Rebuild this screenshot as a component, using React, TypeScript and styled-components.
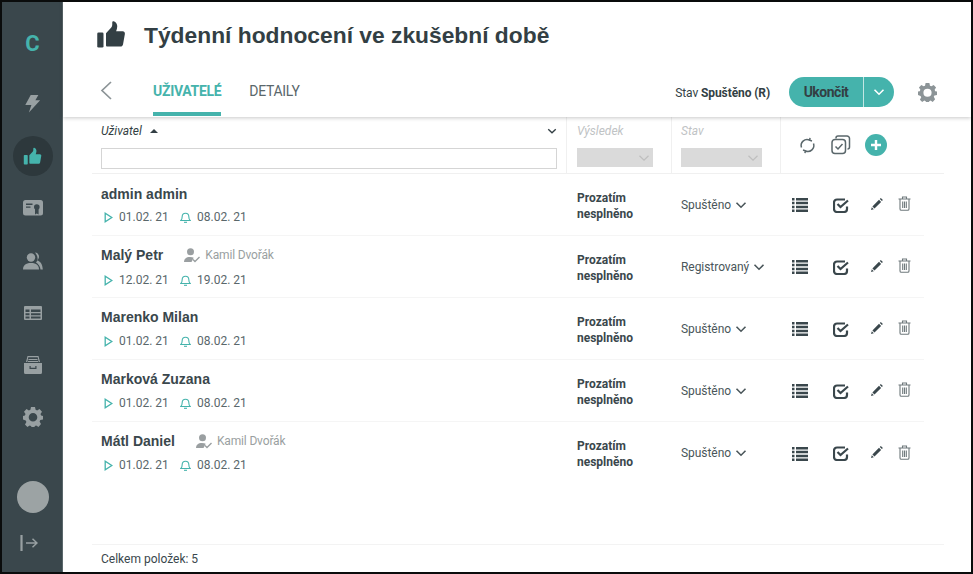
import React from "react";
import styled, { createGlobalStyle } from "styled-components";

const GlobalStyle = createGlobalStyle`
  html, body { margin: 0; padding: 0; background: #0c0f10; }
  body { font-family: Roboto, "Liberation Sans", sans-serif; }
  * { box-sizing: border-box; }
`;

const Frame = styled.div`
  width: 973px;
  height: 574px;
  padding: 2px;
  background: #0a0c0c;
`;
const Layout = styled.div`
  display: flex;
  height: 100%;
  background: #fff;
`;
const Sidebar = styled.nav`
  width: 61px;
  flex: none;
  background: #3a474c;
  border-right: 1px solid #5a676b;
  display: flex;
  flex-direction: column;
  align-items: center;
  padding: 31px 0 0 1px;
`;
const Logo = styled.div`
  height: 22px;
  font: 700 22px Roboto, sans-serif;
  line-height: 22px;
  color: #45b3ac;
  margin-bottom: 29px;
`;
const NavItem = styled.div<{ $active?: boolean }>`
  width: 40px;
  height: 40px;
  border-radius: 50%;
  margin-bottom: 12.2px;
  flex: none;
  display: flex;
  align-items: center;
  justify-content: center;
  background: ${(p) => (p.$active ? "#2d383c" : "transparent")};
  color: ${(p) => (p.$active ? "#45b3ac" : "#98a0a2")};
`;
const Avatar = styled.div`
  width: 32px;
  height: 32px;
  border-radius: 50%;
  background: #9ca3a4;
  margin-top: auto;
`;
const Logout = styled.div`
  height: 18px;
  margin: 21px 8px 20px 0;
  color: #98a0a2;
`;
const Main = styled.main`
  flex: 1;
  min-width: 0;
  display: flex;
  flex-direction: column;
`;
const Head = styled.header`
  flex: none;
  height: 115px;
  box-shadow: 0 1px 4px rgba(0, 0, 0, 0.22);
  z-index: 1;
  display: flex;
  flex-direction: column;
`;
const TitleRow = styled.div`
  display: flex;
  align-items: center;
  height: 66px;
  padding: 0 0 0 33px;
  color: #333f44;
`;
const Title = styled.h1`
  margin: 0 0 0 18px;
  font: 700 22.8px "Liberation Sans", sans-serif;
  color: #333f44;
`;
const TabRow = styled.div`
  flex: 1;
  display: flex;
  align-items: stretch;
  padding: 0 34px 0 36px;
`;
const Back = styled.div`
  width: 54px;
  color: #8c9497;
  padding: 12px 0 0 1px;
`;
const Tab = styled.div<{ $active?: boolean }>`
  height: 48px;
  padding-top: 14px;
  margin-right: 28px;
  font-size: 14px;
  letter-spacing: -0.3px;
  line-height: 18px;
  font-weight: ${(p) => (p.$active ? 700 : 400)};
  color: ${(p) => (p.$active ? "#45b3ac" : "#5a676b")};
  border-bottom: ${(p) => (p.$active ? "4px solid #45b3ac" : "0")};
`;
const StateText = styled.div`
  margin-left: auto;
  align-self: flex-start;
  padding-top: 17px;
  font-size: 12px;
  line-height: 16px;
  letter-spacing: -0.1px;
  color: #333f44;
  b { font-weight: 700; }
`;
const SplitButton = styled.div`
  align-self: flex-start;
  margin: 9px 0 0 19px;
  height: 30px;
  width: 105px;
  display: flex;
  border-radius: 15px;
  background: #45b3ac;
  overflow: hidden;
`;
const ButtonLabel = styled.div`
  width: 75px;
  border-right: 1px solid #c3e6e3;
  text-align: center;
  font-size: 14px;
  letter-spacing: -0.5px;
  line-height: 30px;
  font-weight: 700;
  color: #333f44;
`;
const ButtonCaret = styled.div`
  flex: 1;
  display: flex;
  align-items: center;
  justify-content: center;
  color: #fff;
`;
const HeadGear = styled.div`
  align-self: flex-start;
  margin: 15px 0 0 24px;
  color: #8c9497;
`;
const TableWrap = styled.div`
  flex: 1;
  min-height: 0;
  padding-left: 29px;
  display: flex;
  flex-direction: column;
`;
const Rows = styled.div`
  flex: 1;
`;
const gridCols = "475px 105px 109px 143px";
const HeaderRow = styled.div`
  display: grid;
  grid-template-columns: ${gridCols};
  height: 57px;
  width: 852px;
  border-bottom: 1px solid #f0f0f0;
`;
const HeaderCell = styled.div<{ $left: number }>`
  padding: 6px 9px 0 ${(p) => p.$left}px;
  border-right: 1px solid #f0f0f0;
`;
const HeaderLabel = styled.div<{ $muted?: boolean }>`
  display: flex;
  align-items: center;
  height: 16px;
  font-size: 12px;
  font-style: italic;
  color: ${(p) => (p.$muted ? "#bfc3c5" : "#333f44")};
`;
const SortCaret = styled.span`
  width: 0;
  height: 0;
  margin-left: 8px;
  border: 4px solid transparent;
  border-top: 0;
  border-bottom: 4px solid #333f44;
`;
const HeaderChevron = styled.span`
  margin-left: auto;
  display: flex;
`;
const SearchBox = styled.input`
  display: block;
  width: 456px;
  height: 21px;
  margin-top: 9px;
  border: 1px solid #d5d5d5;
  background: #fff;
  padding: 0;
`;
const FilterSelect = styled.div<{ $width: number }>`
  width: ${(p) => p.$width}px;
  height: 19px;
  margin-top: 9px;
  background: #dadada;
  display: flex;
  align-items: center;
  justify-content: flex-end;
  padding-right: 3px;
  color: #bfbfbf;
`;
const ToolCell = styled.div`
  display: flex;
  align-items: center;
  padding: 0 0 0 18px;
  color: #5a676b;
  svg { flex: none; }
`;
const ToolSlot = styled.div<{ $width: number }>`
  display: flex;
  width: ${(p) => p.$width}px;
`;
const AddButton = styled.div`
  width: 22px;
  height: 22px;
  margin-left: 3px;
  border-radius: 50%;
  background: #45b3ac;
  color: #fff;
  display: flex;
  align-items: center;
  justify-content: center;
`;
const Row = styled.div`
  display: grid;
  grid-template-columns: ${gridCols};
  height: 62px;
  width: 832px;
  border-bottom: 1px solid #f5f5f5;
  color: #333f44;
  &:last-child { border-bottom: 0; }
`;
const UserCell = styled.div<{ $first?: boolean }>`
  padding: ${(p) => (p.$first ? "11px" : "10px")} 0 0 9px;
`;
const NameLine = styled.div`
  display: flex;
  align-items: center;
  height: 18px;
`;
const Name = styled.div`
  font: 700 14px "Liberation Sans", sans-serif;
  color: #3a474c;
`;
const Supervisor = styled.div`
  display: flex;
  align-items: center;
  margin-left: 21px;
  font-size: 12px;
  letter-spacing: -0.15px;
  color: #9a9fa1;
  svg { margin-right: 4px; }
`;
const Dates = styled.div<{ $gap: number }>`
  display: flex;
  align-items: center;
  margin-top: ${(p) => p.$gap}px;
  font-size: 12px;
  line-height: 16px;
  white-space: nowrap;
  color: #5a676b;
`;
const DateIcon = styled.span<{ $width: number; $inset: number }>`
  display: flex;
  flex: none;
  width: ${(p) => p.$width}px;
  padding-left: ${(p) => p.$inset}px;
  color: #45b3ac;
`;
const DateText = styled.span`
  width: 49px;
  margin-right: 12px;
`;
const ResultCell = styled.div`
  padding: 17px 0 0 10px;
  font-size: 12px;
  line-height: 15.5px;
  font-weight: 700;
  color: #3a474c;
`;
const StateCell = styled.div`
  padding-left: 9px;
  display: flex;
  align-items: center;
  font-size: 12px;
  letter-spacing: -0.05px;
  color: #4a565a;
  svg { margin-left: 4px; }
`;
const ActionCell = styled.div`
  display: grid;
  grid-template-columns: 41px 37px 28px 24px;
  align-items: center;
  padding: 1px 0 0 11px;
  color: #3a474c;
`;
const ActionIcon = styled.span<{ $muted?: boolean; $up?: boolean }>`
  display: flex;
  color: ${(p) => (p.$muted ? "#6f797c" : "#3a474c")};
  margin-top: ${(p) => (p.$up ? "-3px" : "0")};
`;
const Footer = styled.div`
  flex: none;
  height: 28px;
  width: 852px;
  border-top: 1px solid #f3f3f3;
  padding: 6px 0 0 9px;
  font-size: 12px;
  line-height: 16px;
  color: #3a474c;
`;

const Thumb = ({ size }: { size: number }) => (
  <svg width={size} height={size} viewBox="0 0 24 24" fill="currentColor">
    <rect x="1" y="10" width="5" height="12" rx="1" />
    <path d="M8 21V10.500l4.200-4.600c.5-.6.8-1.300.8-2.100V1.900c0-.7.6-1.100 1.200-.9 1.800.6 2.800 2.200 2.800 4 0 1.300-.4 2.700-.9 4h5.200c1.200 0 2 1 1.800 2.200l-1.500 8.300c-.2 1-1 1.700-2 1.700H9c-.6 0-1-.4-1-1z" />
  </svg>
);
const Bolt = () => (
  <svg width="17" height="18" viewBox="0 0 18 20" fill="currentColor">
    <path d="M7 0h8.500l-3.300 5.800H17.500L5 19.500l2.800-8.300H1z" />
  </svg>
);
const Cert = () => (
  <svg width="20" height="16" viewBox="0 0 20 16" fill="currentColor">
    <rect width="20" height="15.500" rx="2.500" />
    <path d="M3 3.500h6.500v1.500H3zM3 6.500h4.500v1.200H3z" fill="#3a474c" />
    <circle cx="13.800" cy="7" r="2.800" fill="#3a474c" />
    <path d="M12 9h3.600v5.500l-1.800-1-1.800 1z" fill="#3a474c" />
  </svg>
);
const People = () => (
  <svg width="20" height="18" viewBox="0 0 20 18" fill="currentColor">
    <circle cx="8" cy="5.500" r="4.200" />
    <path d="M0 17.500c0-4 2.500-6.500 8-6.500s8 2.500 8 6.500z" />
    <path d="M12 .5c2.500 0 4 2 4 4.300 0 1.600-.8 2.800-2 3.500 3.500 1 5.500 4.200 5.800 9.200h-2.300c-.3-3-2-5.500-4.500-7 1.200-1.300 1.600-2.700 1.600-4 0-2-1-4-2.600-6z" />
  </svg>
);
const TableIcon = () => (
  <svg width="18" height="14" viewBox="0 0 18 14" fill="currentColor">
    <path fillRule="evenodd" d="M1 0h16a1 1 0 0 1 1 1v12a1 1 0 0 1-1 1H1a1 1 0 0 1-1-1V1a1 1 0 0 1 1-1zM1.500 3.500V6h4V3.500zM7 3.500V6h9.500V3.500zM1.500 7.300v2h4v-2zM7 7.300v2h9.500v-2zM1.500 10.500v2h4v-2zM7 10.500v2h9.500v-2z" />
  </svg>
);
const Archive = () => (
  <svg width="18" height="18" viewBox="0 0 18 18" fill="currentColor">
    <path fillRule="evenodd" d="M3.500 0h11L16 6h-1.300l-1-4.700H4.300l-1 4.700H2z" />
    <rect x="4.500" y="3" width="9" height="1" />
    <rect x="4" y="5" width="10" height="1" />
    <path fillRule="evenodd" d="M0 7h18v9.500a1.500 1.500 0 0 1-1.500 1.500h-15A1.500 1.500 0 0 1 0 16.500zM5.500 10v3h7v-3h-1.200v1.800H6.700V10z" />
  </svg>
);
const Gear = ({ size }: { size: number }) => (
  <svg width={size} height={size} viewBox="0 0 20 20" fill="currentColor">
    <path fillRule="evenodd" d="M8 0h4l.6 2.800 1.500.6L16.500 2 19 4.700l-1.500 2.400.6 1.500L20 9v3.500l-2.700.6-.7 1.500 1.400 2.400L15.500 20l-2.300-1.500-1.300.6L11.500 20h-3l-.5-.9-1.300-.6L4.400 20 2 17.500l1.400-2.400-.7-1.500L0 12.500V9l1.900-.4.600-1.500L1 4.700 3.500 2l2.400 1.400 1.500-.6zM10 6a4.300 4.300 0 1 0 0 8.600A4.300 4.300 0 0 0 10 6z" />
  </svg>
);
const LogoutIcon = () => (
  <svg width="18" height="18" viewBox="0 0 18 18" fill="none" stroke="currentColor" strokeWidth="1.500">
    <path d="M1.500 1v16" strokeWidth="2.200" />
    <path d="M6 9h11M12.500 4.800 17 9l-4.500 4.200" />
  </svg>
);
const Chevron = ({ size = 12, width = 1.6 }: { size?: number; width?: number }) => (
  <svg width={size} height={size} viewBox="0 0 12 12" fill="none" stroke="currentColor" strokeWidth={width}>
    <path d="M1.500 3.800 6 8.200l4.500-4.400" />
  </svg>
);
const BackArrow = () => (
  <svg width="12" height="22" viewBox="0 0 12 22" fill="none" stroke="currentColor" strokeWidth="1.700">
    <path d="M11 2 2 10.500l9 8.500" />
  </svg>
);
const Sync = () => (
  <svg width="17" height="17" viewBox="0 0 17 17" fill="none" stroke="currentColor" strokeWidth="1.500">
    <path d="M2.500 10.500a6 6 0 0 1 8-7.500" />
    <path d="M14.500 6.500a6 6 0 0 1-8 7.500" />
    <path d="M11 .8 10.700 3.200 13 4M6 16.200l.3-2.400L4 13" />
  </svg>
);
const CopyCheck = () => (
  <svg width="20" height="20" viewBox="0 0 20 20" fill="none" stroke="currentColor" strokeWidth="1.500">
    <rect x="1" y="4.500" width="13.500" height="14" rx="3" />
    <path d="M5 3.500V3a2 2 0 0 1 2-2h9a2.500 2.500 0 0 1 2.500 2.500V12a2 2 0 0 1-2 2" />
    <path d="M4.500 11.500l2.500 2.500 4.500-5" />
  </svg>
);
const Plus = () => (
  <svg width="12" height="12" viewBox="0 0 12 12" stroke="currentColor" strokeWidth="2.400">
    <path d="M6 1v10M1 6h10" />
  </svg>
);
const Play = () => (
  <svg width="9" height="11" viewBox="0 0 9 11" fill="none" stroke="currentColor" strokeWidth="1.300">
    <path d="M1.200 1.200v8.600L7.800 5.500z" />
  </svg>
);
const Bell = () => (
  <svg width="11" height="11" viewBox="0 0 11 11" fill="none" stroke="currentColor" strokeWidth="1.100">
    <path d="M.8 8.500c1-.9 1.400-1.700 1.400-4a3.300 3.300 0 0 1 6.600 0c0 2.300.4 3.100 1.400 4z" />
    <path d="M4 10.300h3" />
  </svg>
);
const UserCheck = () => (
  <svg width="17" height="15" viewBox="0 0 17 15" fill="currentColor">
    <circle cx="6.500" cy="3.800" r="3.500" />
    <path d="M0 14c0-3 2-5 6-5 1.500 0 2.800.3 3.700.8L7.500 14z" />
    <path d="M9 11.500l2 2 4.500-4.500" fill="none" stroke="currentColor" strokeWidth="1.400" />
  </svg>
);
const ListIcon = () => (
  <svg width="16" height="14" viewBox="0 0 16 14" fill="currentColor">
    <path d="M0 0h2.500v2.500H0zM4 0h12v2.500H4zM0 3.800h2.500v2.500H0zM4 3.800h12v2.500H4zM0 7.700h2.500v2.500H0zM4 7.700h12v2.500H4zM0 11.500h2.500V14H0zM4 11.500h12V14H4z" />
  </svg>
);
const CheckBox = () => (
  <svg width="16" height="15" viewBox="0 0 16 15" fill="none" stroke="currentColor" strokeWidth="2.200">
    <path d="M14 8.500V11a3 3 0 0 1-3 3H4a3 3 0 0 1-3-3V4.500a3 3 0 0 1 3-3h8" />
    <path d="M4.500 6l3 3L15 2.500" />
  </svg>
);
const Pencil = () => (
  <svg width="14" height="14" viewBox="0 0 14 14" fill="currentColor">
    <path d="M10.800 1 12.900 3.100 11.900 4.100 9.800 2zM9 2.800 11.100 4.900 4.500 11.500 2.400 9.400zM1.800 10.200l2 2L1 13z" />
  </svg>
);
const Trash = () => (
  <svg width="13" height="15" viewBox="0 0 13 15" fill="none" stroke="currentColor" strokeWidth="1.100">
    <path d="M.5 3h12M4.500 3V1h4v2M2 3v10a1.300 1.300 0 0 0 1.300 1.300h6.400A1.300 1.300 0 0 0 11 13V3M4.700 5.500v6.500M6.500 5.500v6.500M8.300 5.500v6.500" />
  </svg>
);

type Person = { name: string; supervisor?: string; start: string; end: string; state: string; gap: number };

const people: Person[] = [
  { name: "admin admin", start: "01.02. 21", end: "08.02. 21", state: "Spuštěno", gap: 6 },
  { name: "Malý Petr", supervisor: "Kamil Dvořák", start: "12.02. 21", end: "19.02. 21", state: "Registrovaný", gap: 8 },
  { name: "Marenko Milan", start: "01.02. 21", end: "08.02. 21", state: "Spuštěno", gap: 7 },
  { name: "Marková Zuzana", start: "01.02. 21", end: "08.02. 21", state: "Spuštěno", gap: 7 },
  { name: "Mátl Daniel", supervisor: "Kamil Dvořák", start: "01.02. 21", end: "08.02. 21", state: "Spuštěno", gap: 7 },
];

export default function App() {
  return (
    <Frame>
      <GlobalStyle />
      <Layout>
        <Sidebar>
          <Logo>C</Logo>
          <NavItem><Bolt /></NavItem>
          <NavItem $active><Thumb size={19} /></NavItem>
          <NavItem><Cert /></NavItem>
          <NavItem><People /></NavItem>
          <NavItem><TableIcon /></NavItem>
          <NavItem><Archive /></NavItem>
          <NavItem><Gear size={20} /></NavItem>
          <Avatar />
          <Logout><LogoutIcon /></Logout>
        </Sidebar>
        <Main>
          <Head>
            <TitleRow>
              <Thumb size={30} />
              <Title>Týdenní hodnocení ve zkušební době</Title>
            </TitleRow>
            <TabRow>
              <Back><BackArrow /></Back>
              <Tab $active>UŽIVATELÉ</Tab>
              <Tab>DETAILY</Tab>
              <StateText>Stav <b>Spuštěno (R)</b></StateText>
              <SplitButton>
                <ButtonLabel>Ukončit</ButtonLabel>
                <ButtonCaret><Chevron /></ButtonCaret>
              </SplitButton>
              <HeadGear><Gear size={19} /></HeadGear>
            </TabRow>
          </Head>
          <TableWrap>
            <HeaderRow>
              <HeaderCell $left={9}>
                <HeaderLabel>
                  Uživatel
                  <SortCaret />
                  <HeaderChevron><Chevron size={10} /></HeaderChevron>
                </HeaderLabel>
                <SearchBox />
              </HeaderCell>
              <HeaderCell $left={10}>
                <HeaderLabel $muted>Výsledek</HeaderLabel>
                <FilterSelect $width={76}><Chevron size={12} width={1.3} /></FilterSelect>
              </HeaderCell>
              <HeaderCell $left={9}>
                <HeaderLabel $muted>Stav</HeaderLabel>
                <FilterSelect $width={81}><Chevron size={12} width={1.3} /></FilterSelect>
              </HeaderCell>
              <ToolCell>
                <ToolSlot $width={32}><Sync /></ToolSlot>
                <ToolSlot $width={31}><CopyCheck /></ToolSlot>
                <AddButton><Plus /></AddButton>
              </ToolCell>
            </HeaderRow>
            <Rows>
              {people.map((p, i) => (
                <Row key={p.name}>
                  <UserCell $first={i === 0}>
                    <NameLine>
                      <Name>{p.name}</Name>
                      {p.supervisor && (
                        <Supervisor><UserCheck />{p.supervisor}</Supervisor>
                      )}
                    </NameLine>
                    <Dates $gap={p.gap}>
                      <DateIcon $width={18} $inset={3}><Play /></DateIcon>
                      <DateText>{p.start}</DateText>
                      <DateIcon $width={17} $inset={0}><Bell /></DateIcon>
                      <DateText>{p.end}</DateText>
                    </Dates>
                  </UserCell>
                  <ResultCell>Prozatím<br />nesplněno</ResultCell>
                  <StateCell>{p.state}<Chevron /></StateCell>
                  <ActionCell>
                    <ActionIcon><ListIcon /></ActionIcon>
                    <ActionIcon><CheckBox /></ActionIcon>
                    <ActionIcon $up><Pencil /></ActionIcon>
                    <ActionIcon $up $muted><Trash /></ActionIcon>
                  </ActionCell>
                </Row>
              ))}
            </Rows>
            <Footer>Celkem položek: 5</Footer>
          </TableWrap>
        </Main>
      </Layout>
    </Frame>
  );
}
